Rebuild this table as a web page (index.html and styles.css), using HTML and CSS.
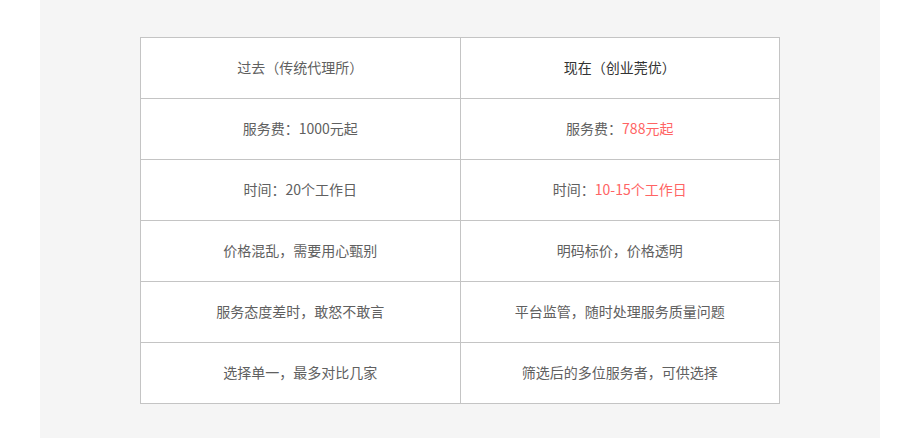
FILE: index.html
```html
<!DOCTYPE html>
<html lang="zh">
<head>
<meta charset="utf-8">
<link rel="stylesheet" href="styles.css">
</head>
<body>
<div class="panel">
  <table class="compare">
    <tr>
      <td>过去（传统代理所）</td>
      <td class="dark">现在（创业莞优）</td>
    </tr>
    <tr>
      <td>服务费：1000元起</td>
      <td>服务费：<span class="hl">788元起</span></td>
    </tr>
    <tr>
      <td>时间：20个工作日</td>
      <td>时间：<span class="hl">10-15个工作日</span></td>
    </tr>
    <tr>
      <td>价格混乱，需要用心甄别</td>
      <td>明码标价，价格透明</td>
    </tr>
    <tr>
      <td>服务态度差时，敢怒不敢言</td>
      <td>平台监管，随时处理服务质量问题</td>
    </tr>
    <tr>
      <td>选择单一，最多对比几家</td>
      <td>筛选后的多位服务者，可供选择</td>
    </tr>
  </table>
</div>
</body>
</html>
```

FILE: styles.css
```css
html, body {
  margin: 0;
  padding: 0;
  background: #ffffff;
}
body {
  font-family: "Noto Sans CJK SC", "Microsoft YaHei", sans-serif;
}
.panel {
  margin-left: 40px;
  width: 840px;
  height: 438px;
  box-sizing: border-box;
  padding-top: 37px;
  background: #f5f5f5;
}
.compare {
  margin-left: 100px;
  width: 640px;
  border-collapse: collapse;
  background: #ffffff;
  table-layout: fixed;
}
.compare td {
  border: 1px solid #c4c4c4;
  height: 58px;
  padding: 0 0 2px 0;
  text-align: center;
  vertical-align: middle;
  font-size: 14px;
  color: #606060;
  line-height: 20px;
}
.compare td.dark {
  color: #333333;
}
.hl {
  color: #ff6464;
}
```
